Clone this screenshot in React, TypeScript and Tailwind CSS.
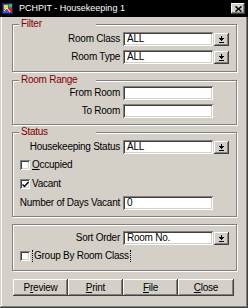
import type { ReactNode } from "react";

const sunken =
  "shadow-[inset_1px_1px_0_#808080,inset_-1px_-1px_0_#ffffff,inset_2px_2px_0_#404040,inset_-2px_-2px_0_#d4d0c8]";
const raised =
  "shadow-[inset_-1px_-1px_0_#404040,inset_1px_1px_0_#ffffff,inset_-2px_-2px_0_#808080]";

function DropIcon() {
  return (
    <svg width="5" height="7" viewBox="0 0 5 7" shapeRendering="crispEdges">
      <rect x="2" y="0" width="1" height="2" fill="#000" />
      <rect x="0" y="2" width="5" height="1" fill="#000" />
      <rect x="1" y="3" width="3" height="1" fill="#000" />
      <rect x="2" y="4" width="1" height="1" fill="#000" />
      <rect x="0" y="6" width="5" height="1" fill="#000" />
    </svg>
  );
}

function Field({ label, value, dropdown }: { label: string; value: string; dropdown?: boolean }) {
  return (
    <div className="flex h-[14px] items-center">
      <span className="w-[107px] whitespace-nowrap text-right">{label}</span>
      <div className={`ml-[3px] flex h-[14px] w-[90px] items-center bg-white pl-[4px] ${sunken}`}>{value}</div>
      {dropdown && (
        <div className={`ml-[1px] flex h-[13px] w-[15px] items-center justify-center bg-[#d4d0c8] ${raised}`}>
          <DropIcon />
        </div>
      )}
    </div>
  );
}

function Check({ checked, children }: { checked?: boolean; children: ReactNode }) {
  return (
    <div className="flex h-[14px] items-center pl-[7px]">
      <div className={`flex h-[10px] w-[10px] items-center justify-center bg-white ${sunken}`}>
        {checked && (
          <svg width="7" height="7" viewBox="0 0 7 7">
            <path d="M0.5 3.5 L2.5 5.5 L6.5 1" stroke="#000" strokeWidth="1.4" fill="none" />
          </svg>
        )}
      </div>
      <span className="ml-[2px]">{children}</span>
    </div>
  );
}

function Group({ legend, className, children }: { legend?: string; className: string; children: ReactNode }) {
  return (
    <div
      className={`relative ml-[12px] w-[225px] border border-[#808080] shadow-[inset_1px_1px_0_#ffffff,1px_1px_0_#ffffff] ${className}`}
    >
      {legend && (
        <span className="absolute left-[6px] top-[-7px] h-[12px] w-[77px] bg-[#d4d0c8] pl-[2px] leading-[12px] text-[#800000]">
          {legend}
        </span>
      )}
      {children}
    </div>
  );
}

export default function App() {
  return (
    <div
      className="flex h-[308px] w-[248px] flex-col bg-[#d4d0c8] text-[10px] leading-none tracking-[-0.25px] text-black shadow-[inset_-1px_-1px_0_#404040,inset_1px_1px_0_#d4d0c8,inset_-2px_-2px_0_#808080,inset_2px_2px_0_#ffffff]"
      style={{ fontFamily: '"Liberation Sans", Arial, sans-serif' }}
    >
      <div className="flex h-[17px] items-center bg-black pl-[2px] pr-[3px]">
        <svg width="12" height="12" viewBox="0 0 12 12">
          <rect x="0.5" y="0.5" width="10" height="10" fill="#3a5fcd" stroke="#1a1a6e" />
          <rect x="2" y="2" width="4" height="4" fill="#ffd800" />
          <rect x="6" y="5" width="4" height="4" fill="#e02020" />
          <path d="M2 8 L5 5 L8 9" stroke="#ffffff" strokeWidth="1" fill="none" />
          <rect x="7" y="1" width="3" height="3" fill="#40c040" />
        </svg>
        <span className="ml-[5px] text-[9px] tracking-normal text-white">PCHPIT - Housekeeping 1</span>
        <div className={`ml-auto flex h-[11px] w-[14px] items-center justify-center bg-[#d4d0c8] ${raised}`}>
          <svg width="7" height="6" viewBox="0 0 7 6">
            <path d="M0.5 0.5 L6.5 5.5 M6.5 0.5 L0.5 5.5" stroke="#000" strokeWidth="1.6" />
          </svg>
        </div>
      </div>

      <Group legend="Filter" className="mt-[7px] flex flex-col gap-[4px] pb-[7px] pt-[7px]">
        <Field label="Room Class" value="ALL" dropdown />
        <Field label="Room Type" value="ALL" dropdown />
      </Group>

      <Group legend="Room Range" className="mt-[8px] flex flex-col gap-[4px] pb-[6px] pt-[5px]">
        <Field label="From Room" value="" />
        <Field label="To Room" value="" />
      </Group>

      <Group legend="Status" className="mt-[7px] flex flex-col pb-[6px] pt-[7px]">
        <Field label="Housekeeping Status" value="ALL" dropdown />
        <div className="mt-[4px]">
          <Check>
            <span className="underline">O</span>ccupied
          </Check>
        </div>
        <div className="mt-[5px]">
          <Check checked>Vacant</Check>
        </div>
        <div className="mt-[5px]">
          <Field label="Number of Days Vacant" value="0" />
        </div>
      </Group>

      <Group className="mt-[7px] flex flex-col gap-[4px] pb-[7px] pt-[6px]">
        <Field label="Sort Order" value="Room No." dropdown />
        <Check>
          <span className="flex h-[12px] items-center border-x border-dotted border-black px-[1px]">
            Group By Room Class
          </span>
        </Check>
      </Group>

      <div className="ml-[13px] mt-[8px] flex">
        {[
          ["P", "r", "eview", 55],
          ["", "P", "rint", 55],
          ["", "F", "ile", 55],
          ["", "C", "lose", 56],
        ].map(([a, u, b, w]) => (
          <div
            key={String(u) + String(b)}
            className={`flex h-[17px] items-center justify-center bg-[#d4d0c8] ${raised}`}
            style={{ width: Number(w) }}
          >
            {a}
            <span className="underline">{u}</span>
            {b}
          </div>
        ))}
      </div>
    </div>
  );
}
